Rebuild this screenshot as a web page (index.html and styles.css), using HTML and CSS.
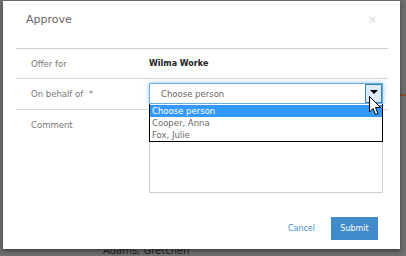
FILE: index.html
```html
<!DOCTYPE html>
<html>
<head>
<meta charset="utf-8">
<link rel="stylesheet" href="styles.css">
</head>
<body>
<div class="page">
  <div class="bg-content">
    <span class="bg-rule"></span>
    <span class="bg-name">Adams, Gretchen</span>
  </div>
  <div class="modal">
    <div class="modal-header">
      <h4 class="modal-title">Approve</h4>
      <span class="close">×</span>
    </div>
    <div class="modal-body">
      <div class="row">
        <div class="label">Offer for</div>
        <div class="value strong">Wilma Worke</div>
      </div>
      <div class="row row-select">
        <div class="label">On behalf of&nbsp; *</div>
        <div class="value">
          <div class="select">
            <span class="select-text">Choose person</span>
            <span class="select-btn"><span class="caret"></span></span>
            <svg class="cursor" width="13" height="20" viewBox="0 0 13 20"><path d="M0.5 0.5 L0.5 16 L4 12.5 L6.5 18.5 L9 17.5 L6.5 11.5 L11.5 11.5 Z" fill="#fff" stroke="#000" stroke-width="1" stroke-linejoin="miter"/></svg>
          </div>
          <ul class="options">
            <li class="selected">Choose person</li>
            <li>Cooper, Anna</li>
            <li>Fox, Julie</li>
          </ul>
        </div>
      </div>
      <div class="row row-comment">
        <div class="label">Comment</div>
        <div class="value"><div class="textarea"></div></div>
      </div>
    </div>
    <div class="modal-footer">
      <a class="btn-link">Cancel</a>
      <button class="btn-primary">Submit</button>
    </div>
  </div>
</div>
</body>
</html>
```
FILE: styles.css
```css
html, body {
  margin: 0;
  padding: 0;
}
body {
  width: 406px;
  height: 256px;
  overflow: hidden;
  background: #6e6e6e;
  font-family: "DejaVu Sans", Verdana, sans-serif;
}
.page {
  position: relative;
  width: 406px;
  height: 256px;
}
.bg-content {
  position: absolute;
  inset: 0;
}
.bg-rule {
  position: absolute;
  left: 398px;
  top: 94px;
  width: 8px;
  height: 2px;
  background: #8a4a2c;
}
.bg-name {
  position: absolute;
  left: 103px;
  top: 245px;
  font-size: 10px;
  color: #1e1e1e;
}
.modal {
  position: absolute;
  left: 3px;
  top: 1px;
  width: 397px;
  height: 248px;
  background: #fff;
  box-shadow: 0 2px 4px rgba(0,0,0,.45);
  display: flex;
  flex-direction: column;
}
.modal-header {
  box-sizing: border-box;
  height: 48px;
  margin: 0 12px 0 13px;
  padding: 12px 11px 0 10px;
  border-bottom: 1px solid #cfcfcf;
  display: flex;
  justify-content: space-between;
  align-items: flex-start;
}
.modal-title {
  margin: 0;
  font-size: 11px;
  line-height: 14px;
  font-weight: normal;
  color: #666;
}
.close {
  font-size: 11px;
  line-height: 14px;
  color: #d8d8d8;
}
.modal-body {
  margin: 0 12px 0 13px;
}
.row {
  display: flex;
  align-items: center;
  box-sizing: border-box;
  height: 30px;
  border-bottom: 1px solid #d6d6d6;
  font-size: 8.5px;
}
.row-select {
  height: 31px;
  align-items: flex-start;
}
.row-select .label {
  padding-top: 9px;
}
.row-comment {
  border-bottom: none;
  height: auto;
  align-items: flex-start;
}
.row-comment .label {
  padding-top: 9px;
}
.label {
  width: 118px;
  padding-left: 15px;
  color: #777;
  line-height: 12px;
  flex-shrink: 0;
}
.value {
  flex: 1;
  margin-right: 5px;
  position: relative;
}
.strong {
  font-weight: bold;
  color: #222;
  font-size: 8px;
}
.row-select .value {
  padding-top: 4px;
}
.select {
  position: relative;
  box-sizing: border-box;
  height: 21px;
  border: 1px solid #66afe9;
  box-shadow: 0 0 5px rgba(102,175,233,.7);
  display: flex;
  align-items: center;
  background: #fff;
}
.select-text {
  flex: 1;
  padding-left: 11px;
  color: #666;
  font-size: 8.5px;
}
.select-btn {
  box-sizing: border-box;
  width: 17px;
  height: 19px;
  border: 1px solid #3c7fb1;
  background: #dcecfc;
  display: flex;
  align-items: center;
  justify-content: center;
}
.caret {
  width: 0;
  height: 0;
  border-left: 4px solid transparent;
  border-right: 4px solid transparent;
  border-top: 4px solid #000;
  margin-top: -4px;
}
.cursor {
  position: absolute;
  left: 219px;
  top: 12px;
  z-index: 3;
}
.options {
  position: absolute;
  left: 0;
  right: 0;
  top: 25px;
  margin: 0;
  padding: 0;
  list-style: none;
  border: 1px solid #000;
  border-top: none;
  background: #fff;
  z-index: 2;
}
.options li {
  height: 12px;
  line-height: 12px;
  padding-left: 2px;
  font-size: 8.5px;
  color: #6b6b6b;
}
.options li.selected {
  margin-top: 1px;
  background: #3399ff;
  color: #fff;
}
.row-comment .value {
  padding-top: 3px;
}
.textarea {
  box-sizing: border-box;
  height: 80px;
  border: 1px solid #cfcfcf;
}
.modal-footer {
  display: flex;
  justify-content: flex-end;
  align-items: center;
  gap: 16px;
  margin: 24px 22px 0 0;
}
.btn-link {
  font-size: 8px;
  color: #428bca;
}
.btn-primary {
  box-sizing: border-box;
  width: 47px;
  height: 23px;
  border: none;
  background: #428bca;
  color: #fff;
  font-family: "DejaVu Sans", Verdana, sans-serif;
  font-size: 8px;
  padding: 0;
}
```
